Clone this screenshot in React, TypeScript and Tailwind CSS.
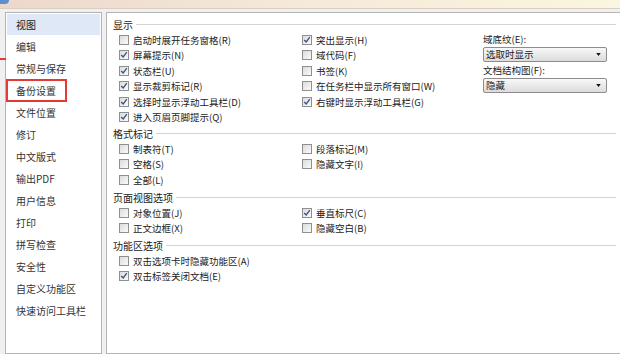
const FONT = { fontFamily: '"Noto Sans CJK SC", "Noto Sans", sans-serif' }

const navItems = [
  '视图', '编辑', '常规与保存', '备份设置', '文件位置', '修订', '中文版式',
  '输出PDF', '用户信息', '打印', '拼写检查', '安全性', '自定义功能区', '快速访问工具栏',
]

function CheckBox({ checked }: { checked?: boolean }) {
  return (
    <span className="relative flex h-[10px] w-[10px] shrink-0 items-center justify-center border border-[#8e8f8f] bg-gradient-to-br from-[#dcdcdc] to-[#fafafa]">
      {checked && (
        <svg viewBox="0 0 10 10" className="absolute left-[0px] top-[0px] h-[8px] w-[8px]">
          <path d="M1.5 5 L4 7.5 L8.5 1.5" fill="none" stroke="#3b5183" strokeWidth="1.6" />
        </svg>
      )}
    </span>
  )
}

function Check({ label, checked }: { label: string; checked?: boolean }) {
  return (
    <div className="flex h-[15.5px] items-center gap-[4px]">
      <CheckBox checked={checked} />
      <span className="whitespace-nowrap text-[9.5px] text-[#1a1a1a]">{label}</span>
    </div>
  )
}

function Header({ title }: { title: string }) {
  return (
    <div className="flex h-[16px] items-center gap-[3px] pr-[4px]">
      <span className="text-[10px] text-[#1a1a1a]">{title}</span>
      <div className="h-px flex-1 bg-[#d3d3d3]" />
    </div>
  )
}

function Select({ value }: { value: string }) {
  return (
    <div className="flex h-[15px] w-[124px] items-center justify-between rounded-[2px] border border-[#8d8d8d] bg-gradient-to-b from-[#f8f8f8] to-[#dcdcdc] pl-[2px] pr-[5px]">
      <span className="text-[9.5px] text-[#1a1a1a]">{value}</span>
      <svg viewBox="0 0 6 4" className="h-[3px] w-[5px]">
        <path d="M0 0 L6 0 L3 4 Z" fill="#111" />
      </svg>
    </div>
  )
}

export default function App() {
  return (
    <div className="relative flex h-[354px] w-[620px] flex-col overflow-hidden bg-[#f0f0f0]" style={FONT}>
      <div className="flex h-[9px] border-b border-[#d9cfc6] bg-gradient-to-r from-[#ecd8cb] via-[#f6ead8] to-[#faf6df]">
        <div className="h-[4px] w-[9px] rounded-br-[4px] bg-[#5b8fd0]" />
      </div>

      <span className="absolute left-0 top-[58px] h-[2px] w-[6px] bg-[#e23a3a]" />

      <div className="flex flex-1 gap-[4px] pl-[5px] pt-[3px]">
        <nav className="flex w-[97px] flex-col border border-[#b4b4b4] bg-white pt-px">
          {navItems.map((item, i) => (
            <div
              key={item}
              className={
                i === 0
                  ? 'mx-px flex h-[21px] items-center bg-[#dfe8f6] pl-[9px] text-[10px] text-[#1a1a1a]'
                  : 'flex h-[22px] items-center pl-[10px] text-[10px] text-[#333]'
              }
            >
              {i === 3 ? (
                <div className="ml-[-10px] flex h-[23px] w-[61px] items-center border-2 border-[#e53935] pl-[8px]">
                  {item}
                </div>
              ) : (
                item
              )}
            </div>
          ))}
        </nav>

        <section className="flex flex-1 flex-col border border-[#b4b4b4] border-r-0 bg-white pl-[6px] pt-[3px]">
          <Header title="显示" />
          <div className="flex pl-[6px]">
            <div className="w-[183px]">
              <Check label="启动时展开任务窗格(R)" />
              <Check label="屏幕提示(N)" checked />
              <Check label="状态栏(U)" checked />
              <Check label="显示裁剪标记(R)" checked />
              <Check label="选择时显示浮动工具栏(D)" checked />
              <Check label="进入页眉页脚提示(Q)" checked />
            </div>
            <div className="w-[181px]">
              <Check label="突出显示(H)" checked />
              <Check label="域代码(F)" />
              <Check label="书签(K)" />
              <Check label="在任务栏中显示所有窗口(W)" />
              <Check label="右键时显示浮动工具栏(G)" checked />
            </div>
            <div className="flex flex-col">
              <div className="flex h-[15px] items-center text-[9.5px] text-[#1a1a1a]">域底纹(E):</div>
              <Select value="选取时显示" />
              <div className="flex h-[16px] items-center text-[9.5px] text-[#1a1a1a]">文档结构图(F):</div>
              <Select value="隐藏" />
            </div>
          </div>

          <Header title="格式标记" />
          <div className="flex pl-[6px]">
            <div className="w-[183px]">
              <Check label="制表符(T)" />
              <Check label="空格(S)" />
              <Check label="全部(L)" />
            </div>
            <div className="w-[181px]">
              <Check label="段落标记(M)" />
              <Check label="隐藏文字(I)" />
            </div>
          </div>

          <div className="mt-[1.5px]">
            <Header title="页面视图选项" />
          </div>
          <div className="flex pl-[6px]">
            <div className="w-[183px]">
              <Check label="对象位置(J)" />
              <Check label="正文边框(X)" />
            </div>
            <div className="w-[181px]">
              <Check label="垂直标尺(C)" checked />
              <Check label="隐藏空白(B)" />
            </div>
          </div>

          <div className="mt-px">
            <Header title="功能区选项" />
          </div>
          <div className="pl-[6px]">
            <Check label="双击选项卡时隐藏功能区(A)" />
            <Check label="双击标签关闭文档(E)" checked />
          </div>
        </section>
      </div>
    </div>
  )
}
